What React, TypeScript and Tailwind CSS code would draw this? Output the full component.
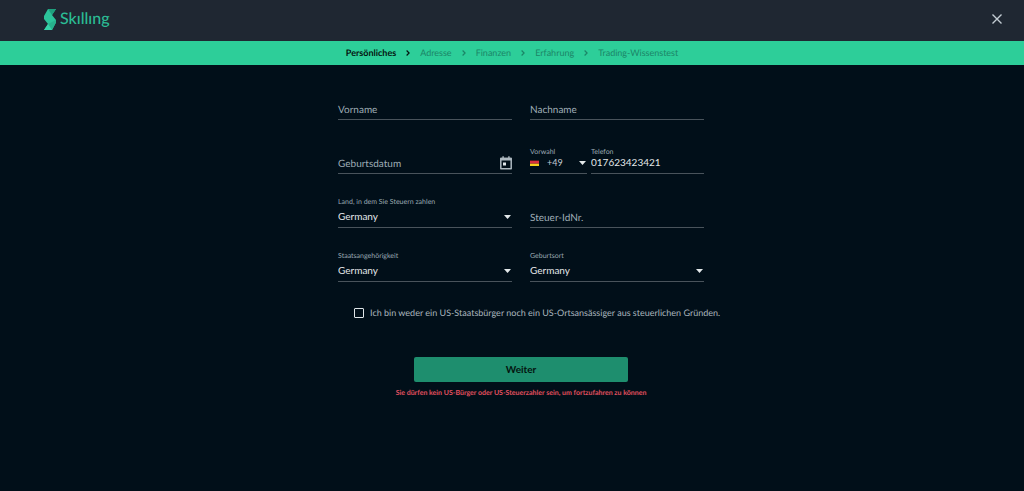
import { useState } from "react";

const steps = ["Persönliches", "Adresse", "Finanzen", "Erfahrung", "Trading-Wissenstest"];

function Logo() {
  return (
    <a href="#" aria-label="Skilling" className="flex items-center gap-1 text-[#2bbd95]">
      <svg viewBox="0 0 12 21" className="h-[21px] w-3">
        <path d="M4 0h8L8 6l4 5v2.5L8 21H0l4-6-4-5V7z" fill="#2cc39a" />
        <path d="M4 0h8L8 6z" fill="#1f9f7d" />
        <path d="M8 21l4-7.500V11L4 15z" fill="#27b18c" />
        <path d="M0 21l4-6 4 6z" fill="#37d3a8" />
      </svg>
      <span className="text-base font-medium leading-5">Skıllıng</span>
    </a>
  );
}

function Chevron() {
  return (
    <svg viewBox="0 0 4 6" className="h-[6px] w-1" fill="none" stroke="currentColor" strokeWidth="1.2">
      <path d="M.6.5L3.1 3 .6 5.5" />
    </svg>
  );
}

function Caret() {
  return (
    <svg viewBox="0 0 7 4" className="pointer-events-none absolute right-[1px] top-1/2 h-1 w-[7px] -translate-y-1/2" fill="#e3e8ea">
      <path d="M0 0h7L3.500 4z" />
    </svg>
  );
}

function CalendarIcon() {
  return (
    <svg viewBox="0 0 12 14" className="h-[14px] w-3">
      <path d="M.8 2.500h10.400v10.300H.8z" fill="none" stroke="#aeb9c0" strokeWidth="1.500" strokeLinejoin="round" />
      <path d="M.4 1.800h11.200v2.800H.4zM2.400 .3h1.400v2.400H2.400zM8.200 .3h1.400v2.400H8.200z" fill="#aeb9c0" />
      <path d="M3 6.500h3v3H3z" fill="#dfe5e8" />
    </svg>
  );
}

function FlagDE() {
  return (
    <svg viewBox="0 0 9 6" className="h-[6px] w-[9px]">
      <path d="M0 0h9v1H0z" fill="#1a1010" />
      <path d="M0 .7h9v3H0z" fill="#d9303e" />
      <path d="M0 3.700h9V6H0z" fill="#f7cf1d" />
    </svg>
  );
}

const fieldClass = "flex h-[34px] flex-col justify-end border-b border-[#49535b]";
const labelClass = "text-[7px] leading-[10px] text-[#9aa9b2]";
const inputClass = "h-5 w-full min-w-0 bg-transparent text-[10px] text-[#e3e8ea] outline-none";

function TextField({ id, label, children }: { id: string; label: string; children?: React.ReactNode }) {
  return (
    <div className={fieldClass}>
      <div className="relative flex items-center">
        <input id={id} placeholder=" " className={`${inputClass} peer`} />
        <label
          htmlFor={id}
          className="pointer-events-none absolute left-0 top-0 text-[10px] leading-[22px] text-[#9fadb6] peer-not-placeholder-shown:hidden"
        >
          {label}
        </label>
        {children}
      </div>
    </div>
  );
}

function SelectField({ id, label }: { id: string; label: string }) {
  return (
    <div className={fieldClass}>
      <label htmlFor={id} className={labelClass}>
        {label}
      </label>
      <div className="relative">
        <select id={id} defaultValue="Germany" className={`${inputClass} block appearance-none pb-[2px]`}>
          <option>Germany</option>
        </select>
        <Caret />
      </div>
    </div>
  );
}

export default function App() {
  const [usFree, setUsFree] = useState(false);

  return (
    <div className="min-h-screen bg-[#010f19] font-[Lato,sans-serif] [text-rendering:geometricPrecision]">
      <header className="flex h-[41px] items-center justify-between bg-[#1f2732] pb-[3px] pl-11 pr-[22px]">
        <Logo />
        <button aria-label="Schließen" className="text-[#c3ccd3]">
          <svg viewBox="0 0 10 10" className="size-[10px]" fill="none" stroke="currentColor" strokeWidth="1.4">
            <path d="M.5.5l9 9M9.5.5l-9 9" />
          </svg>
        </button>
      </header>

      <nav className="h-6 bg-[#2dce99]">
        <ol className="flex h-full items-center justify-center gap-[10px] text-[9px] text-[#1c8567]">
          {steps.map((step, i) => (
            <li key={step} className={i === 0 ? "flex items-center gap-[10px] font-bold text-[#04140f]" : "flex items-center gap-[10px]"}>
              {step}
              {i < steps.length - 1 && <Chevron />}
            </li>
          ))}
        </ol>
      </nav>

      <main className="pl-[18px] pt-[21px]">
        <form className="mx-auto max-w-[366px]" onSubmit={(e) => e.preventDefault()}>
          <div className="grid grid-cols-2 gap-x-[18px] gap-y-5">
            <TextField id="vorname" label="Vorname" />
            <TextField id="nachname" label="Nachname" />
            <TextField id="geburtsdatum" label="Geburtsdatum">
              <button type="button" aria-label="Kalender öffnen">
                <CalendarIcon />
              </button>
            </TextField>

            <div className="flex gap-1">
              <div className="flex h-[34px] w-[57px] flex-col justify-end border-b border-[#49535b]">
                <label htmlFor="vorwahl" className={labelClass}>
                  Vorwahl
                </label>
                <div className="relative mb-1 flex items-center gap-2">
                  <FlagDE />
                  <select id="vorwahl" className="h-3 flex-1 appearance-none bg-transparent text-[9px] leading-3 text-[#c3ccd3] outline-none">
                    <option>+49</option>
                  </select>
                  <Caret />
                </div>
              </div>
              <div className="flex h-[34px] min-w-0 flex-1 flex-col justify-end border-b border-[#49535b]">
                <label htmlFor="telefon" className={labelClass}>
                  Telefon
                </label>
                <input
                  id="telefon"
                  type="tel"
                  defaultValue="017623423421"
                  className="mb-1 h-3 w-full bg-transparent pb-[2px] text-[10px] leading-3 text-[#e3e8ea] outline-none"
                />
              </div>
            </div>

            <SelectField id="steuerland" label="Land, in dem Sie Steuern zahlen" />
            <TextField id="steuerid" label="Steuer-IdNr." />
            <SelectField id="staat" label="Staatsangehörigkeit" />
            <SelectField id="geburtsort" label="Geburtsort" />
          </div>

          <label className="mt-[23px] flex items-center gap-[6px] whitespace-nowrap pl-4 text-[9px] leading-4 text-[#aab6be]">
            <input
              type="checkbox"
              checked={usFree}
              onChange={(e) => setUsFree(e.target.checked)}
              className="size-[10px] shrink-0 appearance-none rounded-[1px] border border-[#dfe5e8] checked:bg-[#2dce99]"
            />
            Ich bin weder ein US-Staatsbürger noch ein US-Ortsansässiger aus steuerlichen Gründen.
          </label>

          <button type="submit" className="mx-auto mt-9 block h-[25px] w-[214px] rounded-[2px] bg-[#1e8e6e] text-[10px] font-bold text-[#04140f]">
            Weiter
          </button>
          <p className="mt-[6px] text-center text-[7px] font-bold leading-[10px] text-[#e2505f]">
            Sie dürfen kein US-Bürger oder US-Steuerzahler sein, um fortzufahren zu können
          </p>
        </form>
      </main>
    </div>
  );
}
